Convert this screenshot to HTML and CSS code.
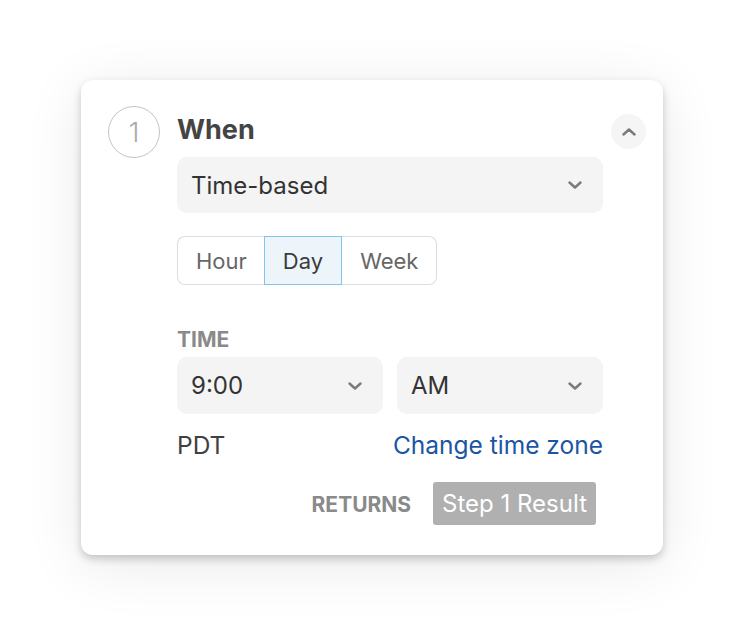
FILE: index.html
```html
<!DOCTYPE html>
<html lang="en">
<head>
    <meta charset="UTF-8">
    <meta name="viewport" content="width=device-width, initial-scale=1.0">
    <title>Step 1 - When</title>
    <link rel="stylesheet" href="styles.css">
</head>
<body>
    <div class="card">
        <div class="step-num">1</div>

        <div class="step-body">
            <h2 class="step-title">When</h2>

            <div class="select">
                <span>Time-based</span>
                <svg class="chevron" width="14" height="8" viewBox="0 0 14 8"><path d="M1.5 1.5 7 6.5 12.5 1.5" /></svg>
            </div>

            <div class="segmented">
                <button class="seg seg-first">Hour</button>
                <button class="seg seg-active">Day</button>
                <button class="seg seg-last">Week</button>
            </div>

            <div class="field-label">Time</div>
            <div class="time-row">
                <div class="select">
                    <span>9:00</span>
                    <svg class="chevron" width="14" height="8" viewBox="0 0 14 8"><path d="M1.5 1.5 7 6.5 12.5 1.5" /></svg>
                </div>
                <div class="select">
                    <span>AM</span>
                    <svg class="chevron" width="14" height="8" viewBox="0 0 14 8"><path d="M1.5 1.5 7 6.5 12.5 1.5" /></svg>
                </div>
            </div>

            <div class="zone-row">
                <span class="zone">PDT</span>
                <a class="zone-link" href="#">Change time zone</a>
            </div>

            <div class="returns-row">
                <span class="returns-label">Returns</span>
                <span class="result-pill">Step 1 Result</span>
            </div>
        </div>

        <button class="collapse-btn">
            <svg width="14" height="8" viewBox="0 0 14 8"><path d="M1.5 6.5 7 1.5 12.5 6.5" /></svg>
        </button>
    </div>
</body>
</html>
```

FILE: styles.css
```css
/* Base */
body {
    margin: 0;
    padding: 80px 0 80px 81px;
    background-color: #ffffff;
    font-family: Inter, "Noto Sans", sans-serif;
    color: #333333;
}

.card {
    display: flex;
    align-items: flex-start;
    box-sizing: border-box;
    width: 582px;
    padding: 26px 17px 30px 27px;
    background-color: #ffffff;
    border-radius: 12px;
    box-shadow: 0 4px 8px rgba(0, 0, 0, 0.2), 0 10px 60px rgba(0, 0, 0, 0.09);
}

/* Step number */
.step-num {
    flex: none;
    display: flex;
    align-items: center;
    justify-content: center;
    box-sizing: border-box;
    width: 52px;
    height: 52px;
    border: 1px solid #c4c4c4;
    border-radius: 50%;
    font-size: 27px;
    font-weight: 300;
    color: #a8a8a8;
}

.step-body {
    flex: 1;
    margin-left: 17px;
}

.step-title {
    margin: 7px 0 0;
    font-size: 27px;
    font-weight: 700;
    line-height: normal;
    color: #444444;
}

/* Selects */
.select {
    display: flex;
    align-items: center;
    justify-content: space-between;
    height: 56px;
    padding: 0 21px 0 14px;
    background-color: #f4f4f4;
    border-radius: 10px;
    font-size: 24px;
    color: #333333;
}

.step-title + .select {
    margin-top: 11px;
}

.chevron path,
.collapse-btn path {
    fill: none;
    stroke: #7a7a7a;
    stroke-width: 2.4;
    stroke-linecap: round;
    stroke-linejoin: round;
}

/* Segmented control */
.segmented {
    display: flex;
    margin-top: 23px;
}

.seg {
    height: 49px;
    padding: 0 18px;
    background-color: #ffffff;
    border: 1px solid #dddddd;
    border-left: none;
    border-right: none;
    font-family: inherit;
    font-size: 22px;
    color: #666666;
}

.seg-first {
    padding: 0 17px 0 18px;
    border-left: 1px solid #dddddd;
    border-radius: 8px 0 0 8px;
}

.seg-last {
    border-right: 1px solid #dddddd;
    border-radius: 0 8px 8px 0;
}

.seg-active {
    background-color: #edf5fb;
    border: 1px solid #80c4f1;
    color: #3c3c3c;
}

/* Time */
.field-label {
    margin-top: 42px;
    font-size: 21px;
    font-weight: 700;
    text-transform: uppercase;
    color: #8a8a8a;
}

.time-row {
    display: grid;
    grid-template-columns: 1fr 1fr;
    gap: 14px;
    margin-top: 5px;
}

.time-row .select {
    height: 57px;
}

.zone-row {
    display: flex;
    justify-content: space-between;
    margin-top: 16px;
    font-size: 24.5px;
}

.zone {
    color: #404040;
}

.zone-link {
    color: #1a56a3;
    text-decoration: none;
}

/* Returns */
.returns-row {
    display: flex;
    align-items: baseline;
    justify-content: flex-end;
    gap: 22px;
    margin: 22px 7px 0 0;
}

.returns-label {
    font-size: 21px;
    font-weight: 700;
    text-transform: uppercase;
    color: #8a8a8a;
}

.result-pill {
    padding: 7px 9px;
    background-color: #b0b0b0;
    border-radius: 3px;
    font-size: 24px;
    color: #ffffff;
}

/* Collapse */
.collapse-btn {
    flex: none;
    display: flex;
    align-items: center;
    justify-content: center;
    width: 35px;
    height: 35px;
    margin: 8px 0 0 8px;
    padding: 0;
    background-color: #f5f5f5;
    border: none;
    border-radius: 50%;
}
```
